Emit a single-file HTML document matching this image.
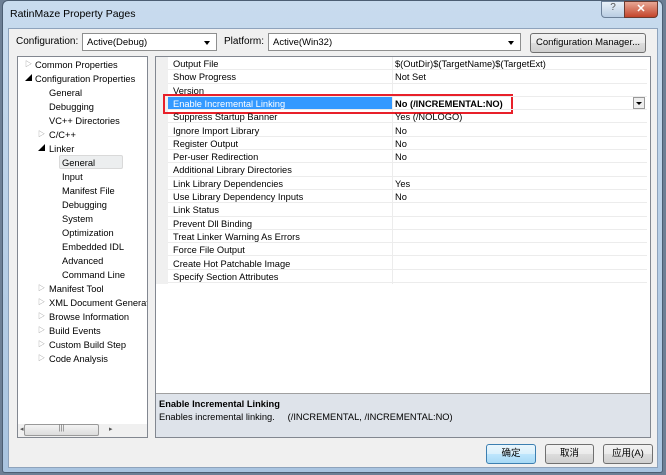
<!DOCTYPE html>
<html><head><meta charset="utf-8"><style>
*{margin:0;padding:0;box-sizing:border-box}
body{width:666px;height:475px;background:#6d7f95;font-family:"Liberation Sans","Noto Sans CJK SC",sans-serif;font-size:9.3px;color:#000;position:relative;overflow:hidden}
.a{position:absolute;white-space:nowrap}
#win{left:2px;top:0;width:661px;height:473px;background:linear-gradient(#c8dbee,#a9c4e0);border:1px solid #4c5e73;border-radius:6px 6px 3px 3px}
#client{left:8px;top:28px;width:650px;height:440px;background:#f0f0f0;border:1px solid #8ea3bc}
.combo{background:#fff;border:1px solid #8e8f8f;height:18px;padding:3px 4px;font-size:9.5px}
.combo:after{content:"";position:absolute;right:6px;top:7px;border:3px solid transparent;border-top:4px solid #000}
.btn{border:1px solid #707070;border-radius:3px;background:linear-gradient(#f2f2f2,#ebebeb 50%,#dddddd 50%,#cfcfcf);text-align:center;font-size:9.5px}
.row{position:absolute;left:168px;width:479px;height:13.3px;border-bottom:1px solid #ececec;font-size:9.3px;line-height:13px}
.row span{position:absolute;left:5px;top:1px}
.row b{position:absolute;left:227px;top:1px;font-weight:normal}
.t{font-size:9.3px;line-height:14px}
</style></head><body>
<div class="a" id="win"></div>
<div class="a" style="left:10px;top:8px;font-size:10.5px">RatinMaze Property Pages</div>
<div class="a" style="left:601px;top:1px;width:24px;height:17px;border:1px solid #6b7f98;border-radius:0 0 0 4px;background:linear-gradient(#e8f0f8,#b9cde3);text-align:center;font-size:10px;color:#555">?</div>
<div class="a" style="left:624px;top:1px;width:34px;height:17px;border:1px solid #6b3a30;border-radius:0 0 4px 0;background:linear-gradient(#e8a795,#c3442b);text-align:center;font-size:11px;color:#fff;font-weight:bold">✕</div>
<div class="a" id="client"></div>
<div class="a" style="left:16px;top:36px;font-size:10px">Configuration:</div>
<div class="a combo" style="left:82px;top:33px;width:135px">Active(Debug)</div>
<div class="a" style="left:224px;top:36px;font-size:10px">Platform:</div>
<div class="a combo" style="left:268px;top:33px;width:253px">Active(Win32)</div>
<div class="a btn" style="left:530px;top:33px;width:116px;height:20px;line-height:18px">Configuration Manager...</div>

<div class="a" style="left:17px;top:56px;width:131px;height:382px;background:#fff;border:1px solid #828790"></div>
<div class="a" style="left:18px;top:424px;width:129px;height:13px;background:#f0f0f0"></div>
<div class="a" style="left:24px;top:424px;width:75px;height:12px;border:1px solid #999;border-radius:2px;background:linear-gradient(#f3f3f3,#dcdcdc);font-size:7px;text-align:center;color:#666">|||</div>
<div class="a" style="left:20px;top:425px;font-size:7px;color:#555">◂</div>
<div class="a" style="left:109px;top:425px;font-size:7px;color:#555">▸</div>
<div class="a" style="left:59px;top:155px;width:64px;height:14px;background:#eceeef;border:1px solid #d9d9d9;border-radius:2px"></div>
<div class="a t" style="left:0;top:58px">
<div style="position:relative;width:150px">
<div class="a" style="left:25px;top:0;color:#888;font-size:7px">▷</div><div class="a" style="left:35px;top:0">Common Properties</div>
<div class="a" style="left:25px;top:14px;font-size:7px">◢</div><div class="a" style="left:35px;top:14px">Configuration Properties</div>
<div class="a" style="left:49px;top:28px">General</div>
<div class="a" style="left:49px;top:42px">Debugging</div>
<div class="a" style="left:49px;top:56px">VC++ Directories</div>
<div class="a" style="left:38px;top:70px;color:#888;font-size:7px">▷</div><div class="a" style="left:49px;top:70px">C/C++</div>
<div class="a" style="left:38px;top:84px;font-size:7px">◢</div><div class="a" style="left:49px;top:84px">Linker</div>
<div class="a" style="left:62px;top:98px">General</div>
<div class="a" style="left:62px;top:112px">Input</div>
<div class="a" style="left:62px;top:126px">Manifest File</div>
<div class="a" style="left:62px;top:140px">Debugging</div>
<div class="a" style="left:62px;top:154px">System</div>
<div class="a" style="left:62px;top:168px">Optimization</div>
<div class="a" style="left:62px;top:182px">Embedded IDL</div>
<div class="a" style="left:62px;top:196px">Advanced</div>
<div class="a" style="left:62px;top:210px">Command Line</div>
<div class="a" style="left:38px;top:224px;color:#888;font-size:7px">▷</div><div class="a" style="left:49px;top:224px">Manifest Tool</div>
<div class="a" style="left:38px;top:238px;color:#888;font-size:7px">▷</div><div class="a" style="left:49px;top:238px;width:98px;overflow:hidden">XML Document Generator</div>
<div class="a" style="left:38px;top:252px;color:#888;font-size:7px">▷</div><div class="a" style="left:49px;top:252px">Browse Information</div>
<div class="a" style="left:38px;top:266px;color:#888;font-size:7px">▷</div><div class="a" style="left:49px;top:266px">Build Events</div>
<div class="a" style="left:38px;top:280px;color:#888;font-size:7px">▷</div><div class="a" style="left:49px;top:280px">Custom Build Step</div>
<div class="a" style="left:38px;top:294px;color:#888;font-size:7px">▷</div><div class="a" style="left:49px;top:294px">Code Analysis</div>
</div></div>

<div class="a" style="left:155px;top:56px;width:496px;height:382px;background:#fff;border:1px solid #828790"></div>
<div class="a" style="left:156px;top:57px;width:12px;height:227px;background:#f0f0f0"></div>
<div class="a" style="left:392px;top:57px;width:1px;height:227px;background:#ececec"></div>
<div class="a" style="left:168px;top:97px;width:224px;height:13px;background:#3399ff"></div>
<div class="a" style="left:163px;top:94px;width:350px;height:20px;border:2px solid #e8202a"></div>
<div class="a" style="left:633px;top:97px;width:12px;height:12px;border:1px solid #999;background:#eee"></div>
<div class="a" style="left:636px;top:102px;border:3px solid transparent;border-top:3px solid #000"></div>
<div class="a" style="left:0;top:57px">
<div class="row" style="top:0"><span>Output File</span><b>$(OutDir)$(TargetName)$(TargetExt)</b></div>
<div class="row" style="top:13.3px"><span>Show Progress</span><b>Not Set</b></div>
<div class="row" style="top:26.6px"><span>Version</span></div>
<div class="row" style="top:39.9px;color:#fff"><span>Enable Incremental Linking</span><b style="color:#000;font-weight:bold">No (/INCREMENTAL:NO)</b></div>
<div class="row" style="top:53.2px"><span>Suppress Startup Banner</span><b>Yes (/NOLOGO)</b></div>
<div class="row" style="top:66.5px"><span>Ignore Import Library</span><b>No</b></div>
<div class="row" style="top:79.8px"><span>Register Output</span><b>No</b></div>
<div class="row" style="top:93.1px"><span>Per-user Redirection</span><b>No</b></div>
<div class="row" style="top:106.4px"><span>Additional Library Directories</span></div>
<div class="row" style="top:119.7px"><span>Link Library Dependencies</span><b>Yes</b></div>
<div class="row" style="top:133px"><span>Use Library Dependency Inputs</span><b>No</b></div>
<div class="row" style="top:146.3px"><span>Link Status</span></div>
<div class="row" style="top:159.6px"><span>Prevent Dll Binding</span></div>
<div class="row" style="top:172.9px"><span>Treat Linker Warning As Errors</span></div>
<div class="row" style="top:186.2px"><span>Force File Output</span></div>
<div class="row" style="top:199.5px"><span>Create Hot Patchable Image</span></div>
<div class="row" style="top:212.8px"><span>Specify Section Attributes</span></div>
</div>
<div class="a" style="left:156px;top:393px;width:494px;height:44px;background:#dee3ea;border-top:1px solid #a0a0a0"></div>
<div class="a" style="left:159px;top:399px;font-weight:bold;font-size:9.3px">Enable Incremental Linking</div>
<div class="a" style="left:159px;top:412px;font-size:9.3px">Enables incremental linking.&nbsp;&nbsp;&nbsp;&nbsp; (/INCREMENTAL, /INCREMENTAL:NO)</div>

<div class="a btn" style="left:486px;top:444px;width:50px;height:20px;line-height:18px;border-color:#3c7fb1;background:linear-gradient(#eaf6fd,#d9f0fc 50%,#bee6fd 50%,#a7d9f5)">确定</div>
<div class="a btn" style="left:545px;top:444px;width:49px;height:20px;line-height:18px">取消</div>
<div class="a btn" style="left:603px;top:444px;width:50px;height:20px;line-height:18px">应用(A)</div>
</body></html>
